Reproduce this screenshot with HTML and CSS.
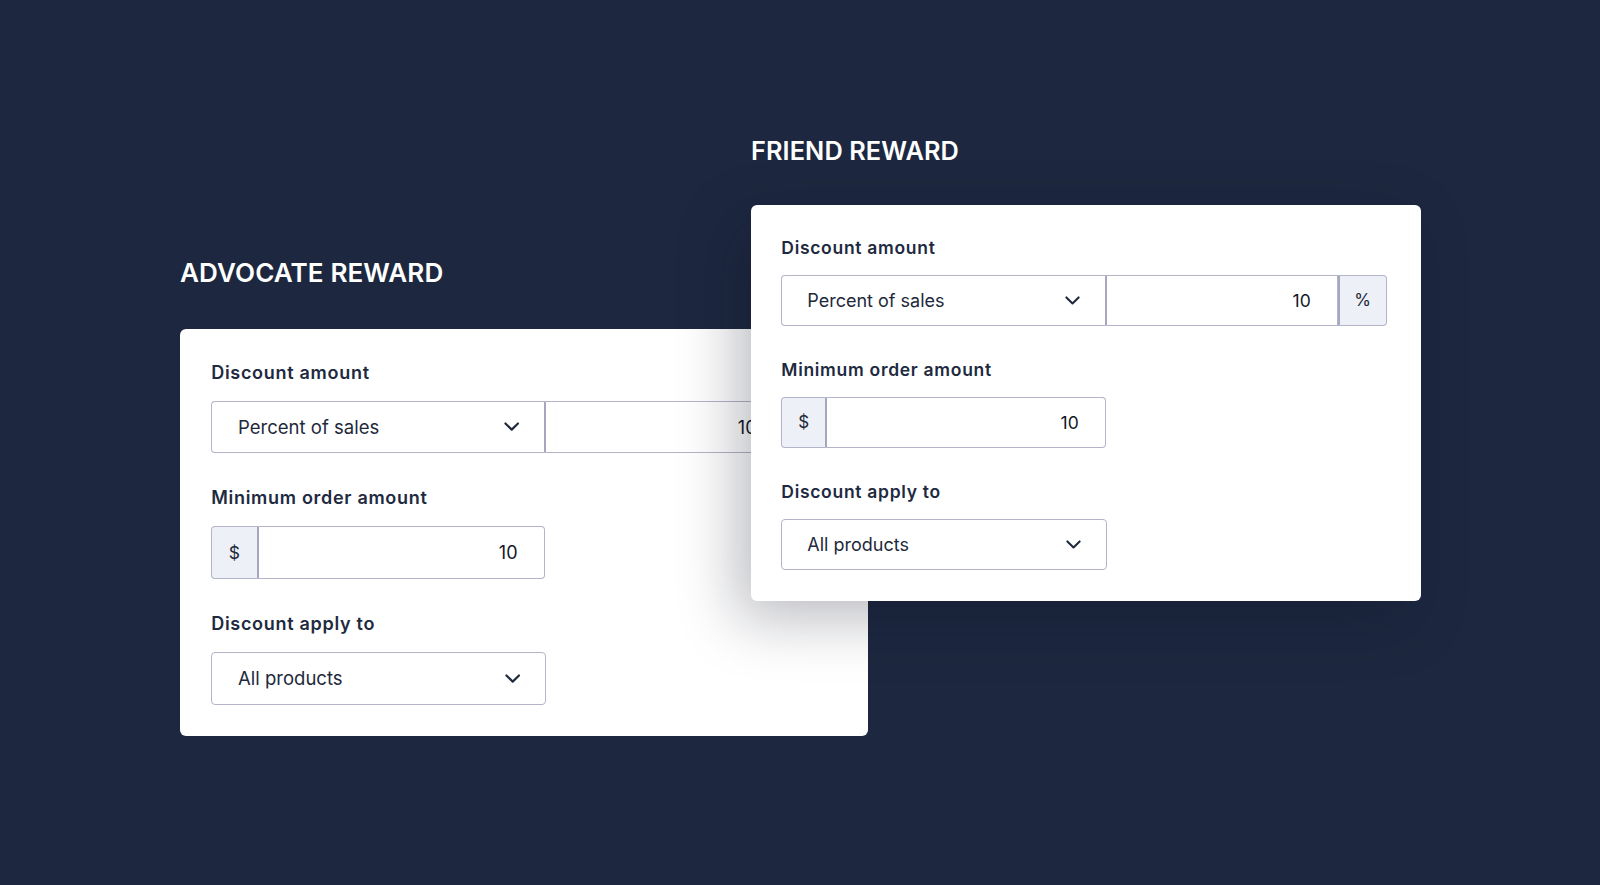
FILE: index.html
```html
<!DOCTYPE html>
<html lang="en">
<head>
<meta charset="utf-8">
<title>Rewards</title>
<link rel="stylesheet" href="styles.css">
</head>
<body>
<main class="stage">
  <section class="reward reward--advocate">
    <h2 class="reward-title">ADVOCATE REWARD</h2>
    <div class="card card--advocate">
      <div class="field">
        <span class="field-label">Discount amount</span>
        <div class="control">
          <div class="select select--joined">
            <span>Percent of sales</span>
            <svg class="chevron" viewBox="0 0 16 9" aria-hidden="true"><path d="M1.5 1.2 L8 7.6 L14.5 1.2"/></svg>
          </div>
          <div class="input input--middle"><span>10</span></div>
          <div class="addon addon--right">%</div>
        </div>
      </div>
      <div class="field">
        <span class="field-label">Minimum order amount</span>
        <div class="control">
          <div class="addon addon--left">$</div>
          <div class="input input--end"><span>10</span></div>
        </div>
      </div>
      <div class="field">
        <span class="field-label">Discount apply to</span>
        <div class="control">
          <div class="select">
            <span>All products</span>
            <svg class="chevron" viewBox="0 0 16 9" aria-hidden="true"><path d="M1.5 1.2 L8 7.6 L14.5 1.2"/></svg>
          </div>
        </div>
      </div>
    </div>
  </section>

  <section class="reward reward--friend">
    <h2 class="reward-title">FRIEND REWARD</h2>
    <div class="card card--friend">
      <div class="field">
        <span class="field-label">Discount amount</span>
        <div class="control">
          <div class="select select--joined">
            <span>Percent of sales</span>
            <svg class="chevron" viewBox="0 0 16 9" aria-hidden="true"><path d="M1.5 1.2 L8 7.6 L14.5 1.2"/></svg>
          </div>
          <div class="input input--middle"><span>10</span></div>
          <div class="addon addon--right">%</div>
        </div>
      </div>
      <div class="field">
        <span class="field-label">Minimum order amount</span>
        <div class="control">
          <div class="addon addon--left">$</div>
          <div class="input input--end"><span>10</span></div>
        </div>
      </div>
      <div class="field">
        <span class="field-label">Discount apply to</span>
        <div class="control">
          <div class="select">
            <span>All products</span>
            <svg class="chevron" viewBox="0 0 16 9" aria-hidden="true"><path d="M1.5 1.2 L8 7.6 L14.5 1.2"/></svg>
          </div>
        </div>
      </div>
    </div>
  </section>
</main>
</body>
</html>
```

FILE: styles.css
```css
* {
  box-sizing: border-box;
}

html,
body {
  margin: 0;
  height: 100%;
}

body {
  background: #1d2840;
  font-family: Inter, "Noto Sans", "Liberation Sans", sans-serif;
  overflow: hidden;
}

.stage {
  display: flex;
  align-items: flex-start;
  padding-left: 180px;
  min-height: 885px;
}

.reward {
  --u: 1px;
  flex: none;
}

.reward--advocate {
  --u: 1.03px;
  width: 688px;
  margin-top: 255px;
}

.reward--friend {
  width: 670px;
  margin-top: 133.3px;
  margin-left: -117px;
  position: relative;
  z-index: 1;
}

.reward-title {
  margin: 0 0 calc(36.7 * var(--u));
  color: #ffffff;
  font-size: calc(25.3 * var(--u));
  line-height: calc(35 * var(--u));
  font-weight: 600;
  letter-spacing: 0.1px;
}

.card {
  background: #ffffff;
  border-radius: 6px;
  padding: calc(31 * var(--u)) 0 calc(30.8 * var(--u)) calc(30.3 * var(--u));
}

.card--friend {
  box-shadow: -14px 18px 60px rgba(10, 16, 32, 0.28);
}

.field + .field {
  margin-top: calc(32 * var(--u));
}

.field-label {
  display: block;
  margin-bottom: calc(14.7 * var(--u));
  color: #1e2a3f;
  font-size: calc(17.5 * var(--u));
  line-height: calc(24 * var(--u));
  font-weight: 600;
  letter-spacing: 0.7px;
}

.control {
  display: flex;
  height: calc(51.3 * var(--u));
}

.select,
.input,
.addon {
  display: flex;
  align-items: center;
  border: 1px solid #b4b3c9;
  flex: none;
}

.select {
  width: calc(325.4 * var(--u));
  justify-content: space-between;
  padding: 0 calc(24.4 * var(--u)) 0 calc(25 * var(--u));
  border-radius: 4px;
  color: #1e293b;
  font-size: calc(18 * var(--u));
}

.select--joined {
  border-radius: 4px 0 0 4px;
  border-right: 2px solid #a7a6bf;
}

.chevron {
  width: calc(15 * var(--u));
  height: calc(9 * var(--u));
  fill: none;
  stroke: #1e293b;
  stroke-width: 2.2;
  stroke-linecap: round;
  stroke-linejoin: round;
}

.input {
  justify-content: flex-end;
  padding-right: calc(26 * var(--u));
  border-left: none;
  color: #111827;
  font-size: calc(17.5 * var(--u));
}

.input--middle {
  width: calc(231 * var(--u));
}

.input--end {
  width: calc(278.4 * var(--u));
  border-radius: 0 4px 4px 0;
}

.addon {
  justify-content: center;
  background: #edf0f6;
  color: #1e293b;
  font-size: calc(17 * var(--u));
}

.addon--right {
  width: calc(49 * var(--u));
  border-left: 2px solid #a7a6bf;
  border-radius: 0 4px 4px 0;
}

.addon--left {
  width: calc(46 * var(--u));
  border-right: 2px solid #a7a6bf;
  border-radius: 4px 0 0 4px;
}
```
